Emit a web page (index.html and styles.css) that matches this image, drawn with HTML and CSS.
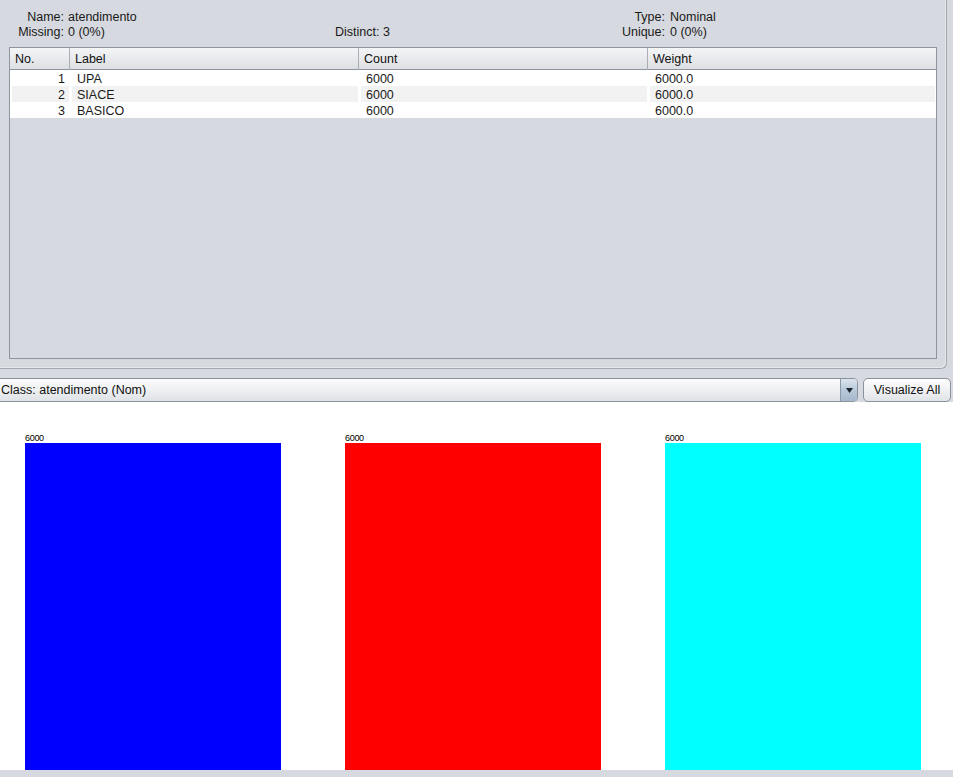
FILE: index.html
```html
<!DOCTYPE html>
<html>
<head>
<meta charset="utf-8">
<link rel="stylesheet" href="styles.css">
</head>
<body>
<div class="panel">
  <div class="info">
    <span class="lbl">Name:</span><span class="val">atendimento</span><span class="mid"></span><span class="lbl">Type:</span><span class="val2">Nominal</span>
    <span class="lbl">Missing:</span><span class="val">0 (0%)</span><span class="mid">Distinct: 3</span><span class="lbl">Unique:</span><span class="val2">0 (0%)</span>
  </div>
  <div class="table">
    <div class="thead">
      <div class="th">No.</div>
      <div class="th">Label</div>
      <div class="th">Count</div>
      <div class="th last">Weight</div>
    </div>
    <div class="tr">
      <div class="td num"><span>1</span></div>
      <div class="td"><span>UPA</span></div>
      <div class="td"><span>6000</span></div>
      <div class="td"><span>6000.0</span></div>
    </div>
    <div class="tr alt">
      <div class="td num"><span>2</span></div>
      <div class="td"><span>SIACE</span></div>
      <div class="td"><span>6000</span></div>
      <div class="td"><span>6000.0</span></div>
    </div>
    <div class="tr">
      <div class="td num"><span>3</span></div>
      <div class="td"><span>BASICO</span></div>
      <div class="td"><span>6000</span></div>
      <div class="td"><span>6000.0</span></div>
    </div>
  </div>
</div>
<div class="classbar">
  <div class="combo">
    <span class="combo-text">Class: atendimento (Nom)</span>
    <span class="combo-arrow"><svg width="7" height="5" viewBox="0 0 7 5"><path d="M0 0H7L3.5 5Z" fill="#1b2530"/></svg></span>
  </div>
  <div class="btn">Visualize All</div>
</div>
<div class="chart">
  <div class="barcol"><div class="barlabel">6000</div><div class="bar blue"></div></div>
  <div class="barcol"><div class="barlabel">6000</div><div class="bar red"></div></div>
  <div class="barcol"><div class="barlabel">6000</div><div class="bar cyan"></div></div>
</div>
<div class="strip"></div>
</body>
</html>
```
FILE: styles.css
```css
html, body {
  margin: 0;
  padding: 0;
}
body {
  width: 953px;
  height: 777px;
  overflow: hidden;
  background: #d6d9df;
  font-family: "Liberation Sans", Arial, sans-serif;
  font-size: 12.5px;
  color: #1a1a1a;
}
.panel {
  width: 946px;
  height: 368px;
  border-right: 1px solid #a2a8b0;
  border-bottom: 1px solid #a2a8b0;
  border-bottom-right-radius: 6px;
  box-shadow: inset -1px -1px 0 #e6e8eb;
}
.info {
  display: grid;
  grid-template-columns: 64px 271px 266px 64px 1fr;
  grid-auto-rows: 15px;
  line-height: 15px;
  padding-top: 10px;
  white-space: nowrap;
}
.lbl {
  text-align: right;
}
.val {
  padding-left: 4px;
}
.val2 {
  padding-left: 5px;
}
.table {
  margin: 7px 0 0 9px;
  width: 926px;
  height: 310px;
  border: 1px solid #8e959f;
}
.thead {
  display: grid;
  grid-template-columns: 60px 289px 289px 288px;
  height: 21px;
  border-bottom: 1px solid #8e959f;
  background: linear-gradient(#f4f5f7, #e6e8eb 60%, #dcdfe3);
}
.th {
  border-right: 1px solid #a9afb7;
  line-height: 21px;
  padding: 1px 0 0 5px;
  color: #111;
}
.th.last {
  border-right: none;
}
.tr {
  display: grid;
  grid-template-columns: 60px 289px 289px 288px;
  height: 16px;
  background: #fff;
}
.td {
  padding: 0 1px 0 2px;
}
.td span {
  display: block;
  padding: 1px 0 0 5px;
  height: 15px;
  line-height: 16px;
}
.td.num span {
  text-align: right;
  padding-left: 0;
  padding-right: 4px;
}
.tr.alt .td span {
  background: #f2f2f2;
}
.classbar {
  display: flex;
  margin-top: 9px;
  height: 24px;
  gap: 5px;
}
.combo {
  display: flex;
  width: 857px;
  height: 22px;
  border: 1px solid #8a929c;
  border-left: none;
  border-radius: 0 5px 5px 0;
  background: linear-gradient(#fbfbfc, #eef0f2 50%, #dfe2e6);
  overflow: hidden;
}
.combo-text {
  flex: 1;
  line-height: 22px;
  padding-left: 1px;
  color: #111;
}
.combo-arrow {
  width: 16px;
  display: flex;
  align-items: center;
  justify-content: center;
  border-left: 1px solid #8a99aa;
  background: linear-gradient(#dbe4ee, #b9c9d9 50%, #a5b8cc);
}
.btn {
  width: 86px;
  height: 22px;
  border: 1px solid #8a929c;
  border-radius: 5px;
  background: linear-gradient(#fdfdfd, #f0f1f3 50%, #e0e3e7);
  line-height: 22px;
  text-align: center;
  color: #111;
}
.chart {
  height: 368px;
  background: #fff;
  display: flex;
  align-items: flex-end;
  gap: 64px;
  padding-left: 25px;
}
.barcol {
  width: 256px;
  display: flex;
  flex-direction: column;
}
.barlabel {
  font-size: 9px;
  line-height: 9px;
  height: 9px;
  color: #000;
  letter-spacing: -0.3px;
}
.bar {
  height: 327px;
}
.blue { background: #0000ff; }
.red { background: #ff0000; }
.cyan { background: #00ffff; }
.strip {
  height: 7px;
}
```
